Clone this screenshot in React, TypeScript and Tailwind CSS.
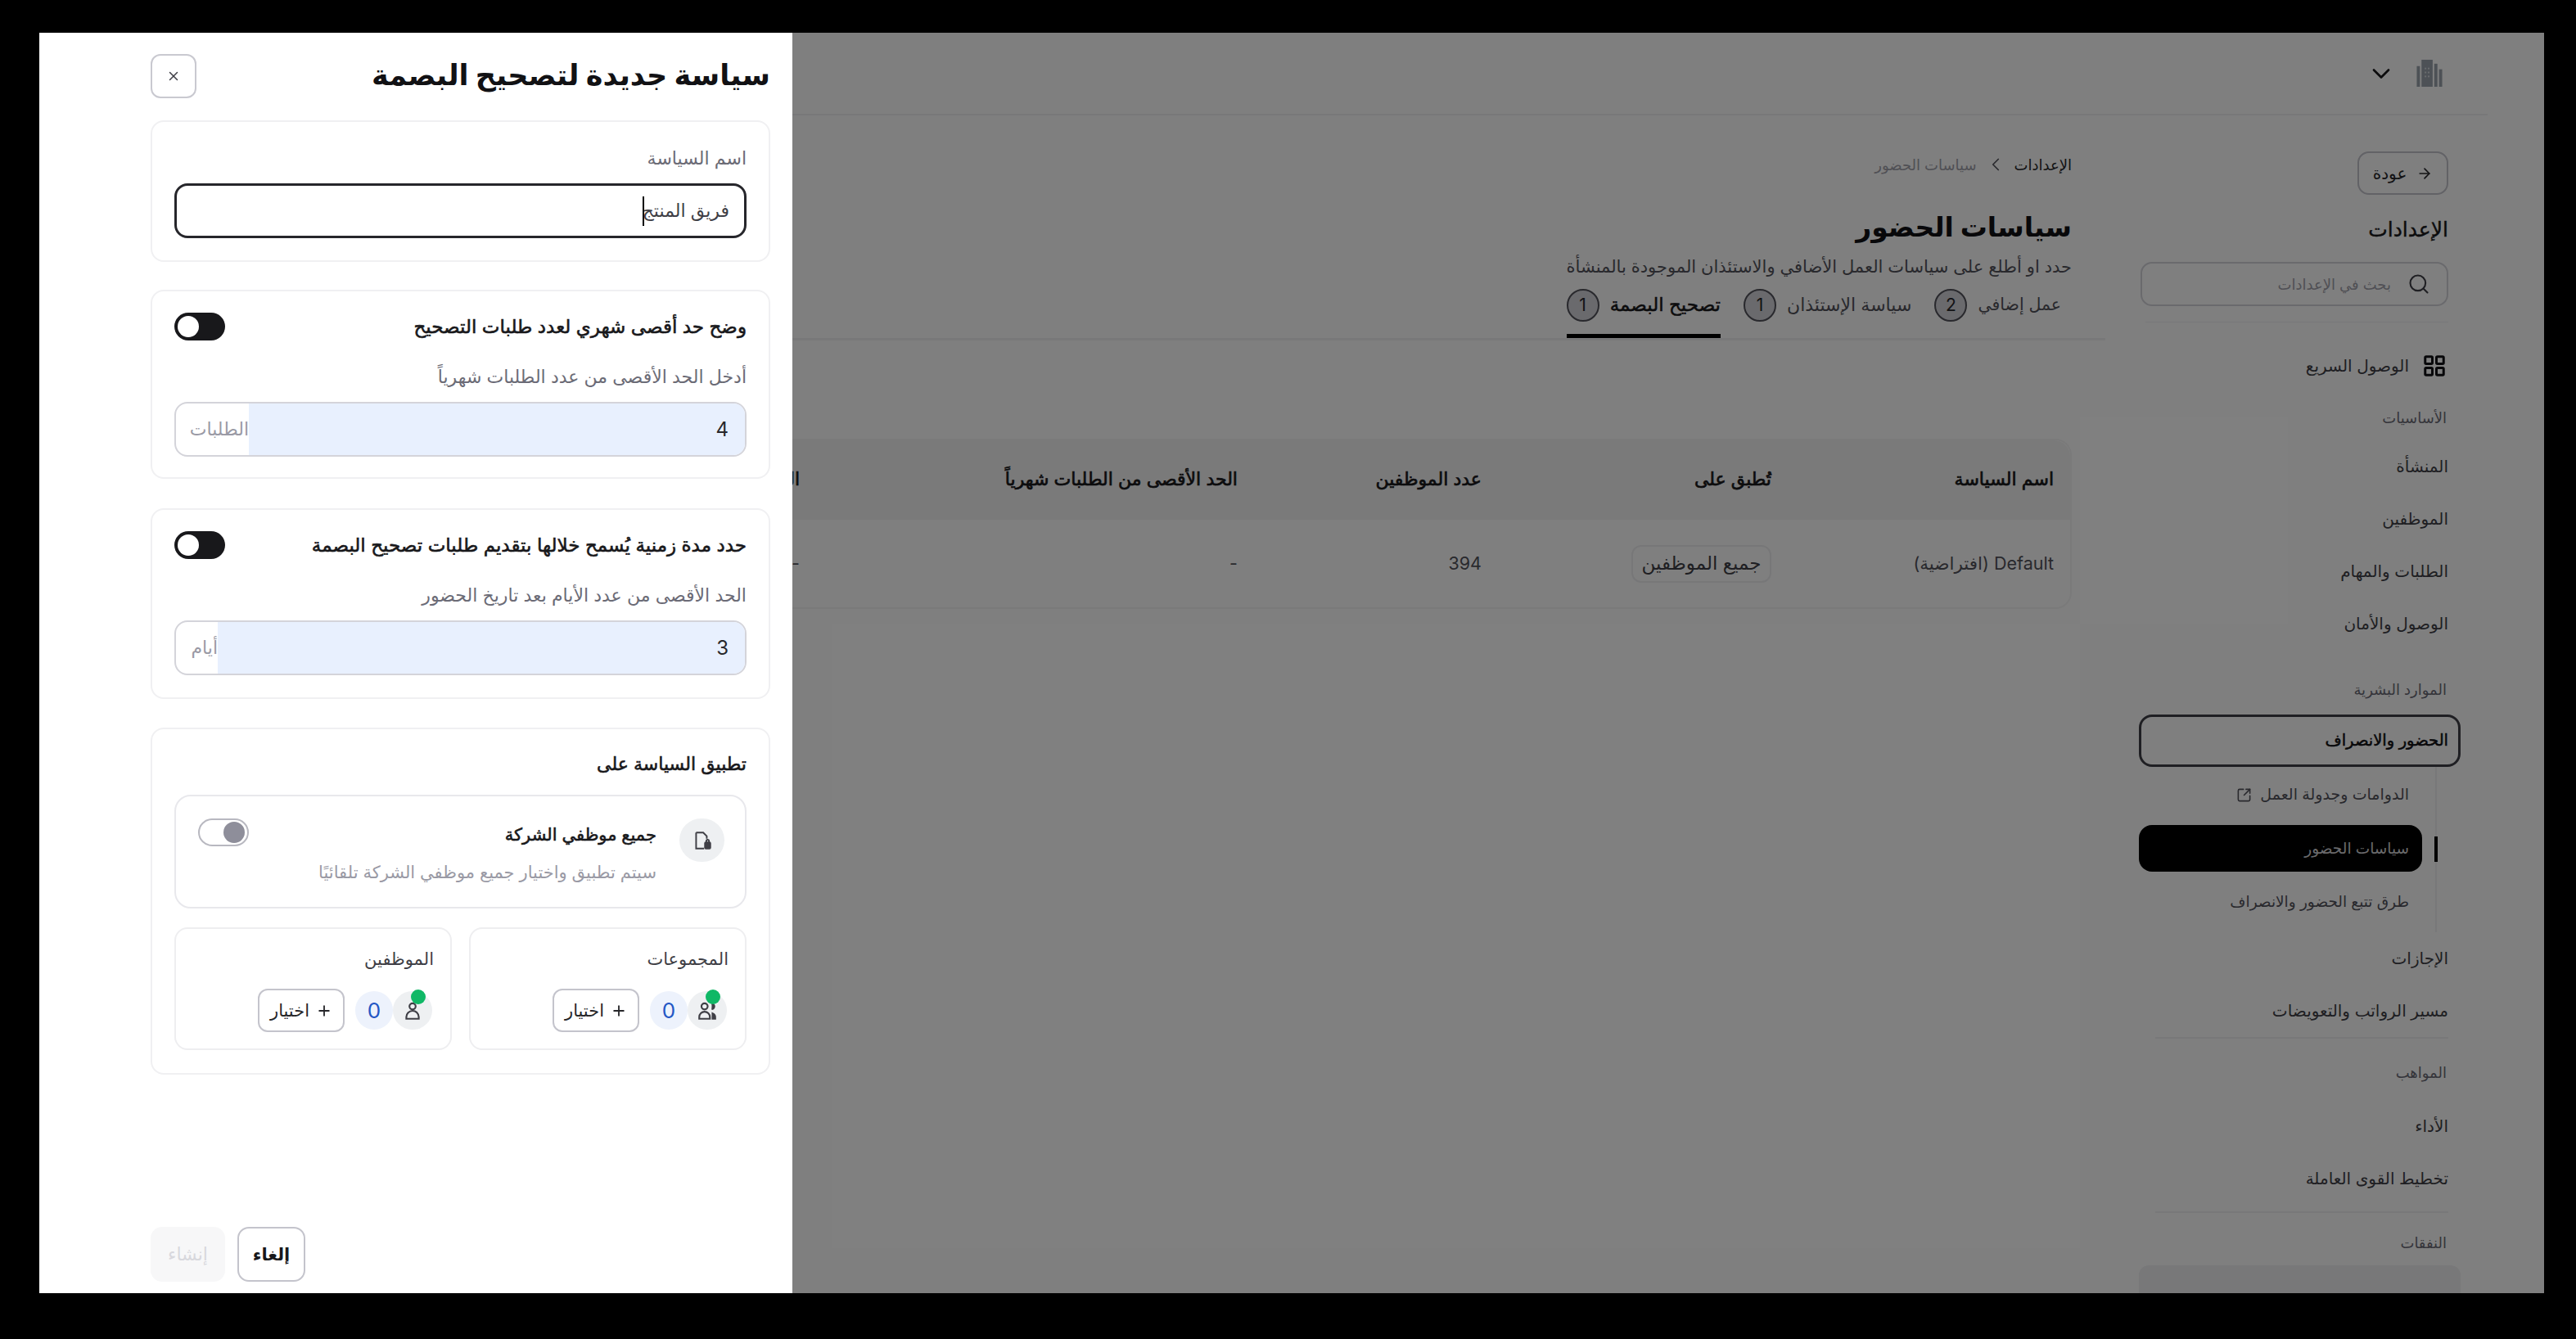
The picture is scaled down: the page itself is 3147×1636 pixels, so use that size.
import React from "react";
import { ArrowRight, ChevronDown, ChevronLeft, LayoutGrid, Plus, Search, SquareArrowOutUpRight, X } from "lucide-react";

function Toggle() {
  return (
    <div className="flex h-[34px] w-[62px] items-center justify-end rounded-full bg-[#18181b] px-[4px]" dir="rtl">
      <div className="h-[26px] w-[26px] rounded-full bg-white" />
    </div>
  );
}

function Field({ value, unit, blue }: { value: string; unit: string; blue: string }) {
  return (
    <div className="flex h-[67px] overflow-hidden rounded-[16px] border-2 border-[#d4d4da] bg-white">
      <div className="flex flex-1 items-center bg-[#e8f0fe] pr-[20px] text-[24px] text-[#27272a]">{value}</div>
      <div className={`flex items-center pl-[20px] text-[22px] text-[#9a9aa5] ${blue}`}>{unit}</div>
    </div>
  );
}

function CompanyIcon() {
  return (
    <svg viewBox="0 0 24 24" className="h-[26px] w-[26px]" fill="none" stroke="#3f3f46" strokeWidth="1.8">
      <path d="M5 3h8l4 4v3M5 3v18h9" />
      <rect x="15" y="14" width="6" height="7" rx="1" fill="#3f3f46" />
      <path d="M16.5 14v-1.5a1.5 1.5 0 0 1 3 0V14" />
    </svg>
  );
}

function PersonIcon({ group }: { group?: boolean }) {
  return (
    <svg viewBox="0 0 24 24" className="h-[26px] w-[26px]" fill="none" stroke="#3f3f46" strokeWidth="2">
      <circle cx={group ? 9 : 12} cy="7" r="3.5" />
      <path d={group ? "M3 21v-2a6 6 0 0 1 12 0v2z" : "M5 21v-2a7 7 0 0 1 14 0v2z"} />
      {group && <path d="M17 10a3 3 0 0 0 0-6M18 15a5 5 0 0 1 3 5v1h-3z" fill="#3f3f46" />}
    </svg>
  );
}

function Selector({ label, group }: { label: string; group?: boolean }) {
  return (
    <div className="flex h-[150px] flex-1 flex-col rounded-[16px] border-2 border-[#eeeef0] pr-[20px] pt-[19px]">
      <div className="h-[36px] text-[21px] leading-[36px] text-[#3f3f46]">{label}</div>
      <div className="mr-[2px] mt-[18px] flex items-center">
        <div className="relative flex h-[47px] w-[48px] items-center justify-center rounded-full bg-[#eef0f2]">
          <PersonIcon group={group} />
          <div className="absolute -top-[2px] left-[22px] h-[18px] w-[18px] rounded-full bg-[#10b866]" />
        </div>
        <div className="flex h-[47px] w-[46px] items-center justify-center rounded-full bg-[#edf2fc] text-[26px] text-[#2457c5]">0</div>
        <div className="mr-[13px] flex h-[53px] w-[106px] items-center justify-center gap-[8px] rounded-[12px] border-2 border-[#c4c4cc] bg-white text-[21px] text-[#27272a]">
          <Plus size={20} strokeWidth={2.2} />
          <span>اختيار</span>
        </div>
      </div>
    </div>
  );
}

function Panel() {
  return (
    <div dir="rtl" className="absolute inset-y-0 left-0 flex w-[920px] flex-col bg-white pl-[136px] pr-[27px] pt-[26px] pb-[14px]">
      <div className="flex h-[54px] items-center justify-between">
        <h2 className="pb-[3px] text-[35px] font-bold text-[#111114]">سياسة جديدة لتصحيح البصمة</h2>
        <div className="flex h-[54px] w-[56px] items-center justify-center rounded-[12px] border-2 border-[#c9c9d0]">
          <X size={18} strokeWidth={2} className="text-[#3f3f46]" />
        </div>
      </div>

      <section className="mt-[27px] h-[173px] rounded-[16px] border-2 border-[#f0f0f2] px-[27px] pt-[26px]">
        <div className="h-[36px] text-[22px] leading-[36px] text-[#6b6b76]">اسم السياسة</div>
        <div className="mt-[13px] flex h-[67px] items-center rounded-[16px] border-[3px] border-[#26262b] pr-[18px] text-[22px] text-[#3f3f46]">
          <span>فريق المنتج</span>
          <span className="-mr-[2px] h-[36px] w-[2px] bg-black" />
        </div>
      </section>

      <section className="mt-[34px] h-[231px] rounded-[16px] border-2 border-[#f0f0f2] px-[27px] pt-[26px]">
        <div className="flex h-[34px] items-center justify-between">
          <div className="text-[23px] text-[#18181b] [-webkit-text-stroke:0.6px_#18181b]">وضح حد أقصى شهري لعدد طلبات التصحيح</div>
          <Toggle />
        </div>
        <div className="mt-[27px] h-[34px] text-[22px] leading-[34px] text-[#6b6b76]">أدخل الحد الأقصى من عدد الطلبات شهرياً</div>
        <div className="mt-[14px]"><Field value="4" unit="الطلبات" blue="w-[89px]" /></div>
      </section>

      <section className="mt-[36px] h-[233px] rounded-[16px] border-2 border-[#f0f0f2] px-[27px] pt-[26px]">
        <div className="flex h-[34px] items-center justify-between">
          <div className="text-[23px] text-[#18181b] [-webkit-text-stroke:0.6px_#18181b]">حدد مدة زمنية يُسمح خلالها بتقديم طلبات تصحيح البصمة</div>
          <Toggle />
        </div>
        <div className="mt-[27px] h-[34px] text-[22px] leading-[34px] text-[#6b6b76]">الحد الأقصى من عدد الأيام بعد تاريخ الحضور</div>
        <div className="mt-[14px]"><Field value="3" unit="أيام" blue="w-[51px]" /></div>
      </section>

      <section className="mt-[35px] h-[424px] rounded-[16px] border-2 border-[#f0f0f2] px-[27px] pt-[26px]">
        <div className="h-[34px] text-[22px] leading-[32px] text-[#18181b] [-webkit-text-stroke:0.6px_#18181b]">تطبيق السياسة على</div>
        <div className="mt-[20px] flex h-[139px] items-start rounded-[20px] border-2 border-[#e8e8ec] pl-[27px] pr-[25px] pt-[27px]">
          <div className="flex h-[53px] w-[55px] shrink-0 items-center justify-center rounded-full bg-[#eef0f2]"><CompanyIcon /></div>
          <div className="mr-[28px] flex-1">
            <div className="text-[21px] leading-[40px] text-[#18181b] [-webkit-text-stroke:0.6px_#18181b]">جميع موظفي الشركة</div>
            <div className="mt-[4px] text-[21px] leading-[44px] text-[#9a9aa5]">سيتم تطبيق واختيار جميع موظفي الشركة تلقائيًا</div>
          </div>
          <div className="flex h-[34px] w-[62px] items-center justify-start rounded-full border-2 border-[#b8b8c0] bg-white px-[3px]">
            <div className="h-[26px] w-[26px] rounded-full bg-[#8e8e9a]" />
          </div>
        </div>
        <div className="mt-[23px] flex gap-[21px]">
          <Selector label="المجموعات" group />
          <Selector label="الموظفين" />
        </div>
      </section>

      <div className="mt-auto flex justify-end gap-[15px]">
        <div className="flex h-[67px] w-[83px] items-center justify-center rounded-[14px] border-2 border-[#c4c4cc] text-[21px] font-bold text-[#18181b]">إلغاء</div>
        <div className="flex h-[67px] w-[91px] items-center justify-center rounded-[14px] bg-[#f7f7f8] text-[22px] text-[#d8d8dd]">إنشاء</div>
      </div>
    </div>
  );
}

function Row({ children }: { children: React.ReactNode }) {
  return <div className="flex h-[64px] items-center pr-[15px] text-[20px] text-[#3f3f46]">{children}</div>;
}

function Group({ children }: { children: React.ReactNode }) {
  return <div className="flex h-[56px] items-center pr-[17px] text-[18px] text-[#6b6b76]">{children}</div>;
}

function Divider({ className }: { className: string }) {
  return <div className={`mr-[15px] w-[358px] border-b-2 border-[#f0f0f2] ${className}`} />;
}

function Sidebar() {
  return (
    <aside className="mr-[102px] w-[434px] shrink-0 pl-[41px]">
      <div className="pt-[44px]">
        <div className="mr-[15px] flex h-[53px] w-[111px] items-center justify-center gap-[12px] rounded-[14px] border-2 border-[#c4c4cc] text-[20px] text-[#27272a]">
          <ArrowRight size={20} /> <span>عودة</span>
        </div>
        <div className="mt-[20px] pr-[15px] text-[25px] leading-[44px] text-[#18181b] [-webkit-text-stroke:0.4px_#18181b]">الإعدادات</div>
        <div className="mr-[15px] mt-[18px] flex h-[54px] w-[376px] items-center rounded-[14px] border-2 border-[#d4d4da] pr-[20px] text-[18px] text-[#a0a0aa]">
          <Search size={28} strokeWidth={1.8} className="text-[#3f3f46]" />
          <span className="mr-[20px]">بحث في الإعدادات</span>
        </div>
        <div className="mr-[15px] mt-[19px] w-[370px] border-b border-[#f0f0f2]" />
      </div>
      <div className="flex h-[88px] flex-col">
        <div className="mt-[33px] flex h-[40px] items-center pr-[17px] text-[20px] text-[#3f3f46]">
          <LayoutGrid size={30} strokeWidth={2.4} className="text-[#111114]" />
          <span className="mr-[16px]">الوصول السريع</span>
        </div>
      </div>
      <Group>الأساسيات</Group>
      <Row>المنشأة</Row>
      <Row>الموظفين</Row>
      <Row>الطلبات والمهام</Row>
      <Row>الوصول والأمان</Row>
      <div className="mt-[20px]"><Group>الموارد البشرية</Group></div>
      <div className="mt-[3px] flex h-[64px] items-center rounded-[16px] border-[3px] border-[#3f3f46] pr-[12px] text-[19.5px] text-[#111114] [-webkit-text-stroke:0.5px_#111114]">الحضور والانصراف</div>
      <div className="relative mr-[29px] border-r-2 border-[#f0f0f2]">
        <div className="flex h-[68px] items-center pr-[32px] text-[19px] text-[#52525b]">
          الدوامات وجدولة العمل
          <SquareArrowOutUpRight size={19} className="mr-[10px]" />
        </div>
        <div className="mr-[16px] mt-[3px] flex h-[57px] w-[346px] items-center rounded-[16px] bg-black pr-[16px] text-[18.5px] text-[#d4d4d8]">سياسات الحضور</div>
        <div className="flex h-[74px] items-center pr-[32px] text-[18.5px] text-[#52525b]">طرق تتبع الحضور والانصراف</div>
        <div className="absolute -right-[3px] top-[85px] h-[31px] w-[4px] bg-black" />
      </div>
      <Row>الإجازات</Row>
      <Row>مسير الرواتب والتعويضات</Row>
      <Divider className="" />
      <div className="mt-[13px]"><Group>المواهب</Group></div>
      <div className="mt-[6px]"><Row>الأداء</Row></div>
      <Row>تخطيط القوى العاملة</Row>
      <Divider className="mt-[8px]" />
      <div className="mt-[8px]"><Group>النفقات</Group></div>
      <div className="h-[40px] rounded-t-[12px] bg-[#f0f0f2]" />
    </aside>
  );
}

function Tab({ label, n, active, size }: { label: string; n: string; active?: boolean; size: string }) {
  return (
    <div className={`flex h-[66px] items-center gap-[13px] border-b-[5px] pb-[10px] ${active ? "border-black text-[#18181b] [-webkit-text-stroke:0.5px_#18181b]" : "border-transparent text-[#52525b]"}`}>
      <span className={size}>{label}</span>
      <span className="flex h-[40px] w-[40px] items-center justify-center rounded-full border-2 border-[#52525b] bg-[#d4d4da] text-[21px] text-[#27272a] [-webkit-text-stroke:0px]">{n}</span>
    </div>
  );
}

function Main() {
  const cols = "grid grid-cols-[345px_354px_298px_535px_1fr]";
  return (
    <main className="min-w-0 flex-1">
      <div className="pr-[41px] pt-[44px]">
        <div className="flex h-[32px] items-center gap-[10px] text-[18px] text-[#a0a0aa]">
          <span className="text-[#27272a]">الإعدادات</span>
          <ChevronLeft size={26} strokeWidth={1.6} className="text-[#52525b]" />
          <span>سياسات الحضور</span>
        </div>
        <h1 className="mt-[35px] text-[33px] font-bold leading-[50px] text-[#111114]">سياسات الحضور</h1>
        <p className="mt-[6px] text-[21px] leading-[36px] text-[#52525b]">حدد او أطلع على سياسات العمل الأضافي والاستئذان الموجودة بالمنشأة</p>
      </div>
      <div className="mt-[3px] flex gap-[28px] border-b-[3px] border-[#f0f0f2] pr-[54px]">
        <Tab label="عمل إضافي" n="2" size="text-[20.5px]" />
        <Tab label="سياسة الإستئذان" n="1" size="text-[22px]" />
        <Tab label="تصحيح البصمة" n="1" active size="text-[23px]" />
      </div>
      <div className="mr-[41px] mt-[120px] rounded-[20px] border-2 border-[#f4f4f5]">
        <div className={`${cols} h-[97px] items-center rounded-t-[20px] bg-[#f4f4f5] pb-[3px] pr-[20px] text-[22px] text-[#18181b] [-webkit-text-stroke:0.7px_#18181b]`}>
          <div>اسم السياسة</div>
          <div>تُطبق على</div>
          <div>عدد الموظفين</div>
          <div>الحد الأقصى من الطلبات شهرياً</div>
          <div>الحد الأقصى</div>
        </div>
        <div className={`${cols} h-[107px] items-center pr-[20px] text-[21.5px] text-[#52525b]`}>
          <div>Default (افتراضية)</div>
          <div><span className="inline-flex h-[46px] w-[171px] items-center justify-center rounded-[12px] border-2 border-[#eeeef0] text-[23px] text-[#3f3f46]">جميع الموظفين</span></div>
          <div>394</div>
          <div>-</div>
          <div>-</div>
        </div>
      </div>
    </main>
  );
}

function Building() {
  return (
    <svg viewBox="0 0 32 34" className="h-[33px] w-[32px]" fill="#9aa3ad">
      <rect x="0" y="8" width="4" height="26" />
      <rect x="6" y="0" width="14" height="34" />
      <rect x="22" y="5" width="4" height="29" />
      <rect x="28" y="12" width="4" height="22" />
      <g fill="#d4d8dd">
        <rect x="10" y="10" width="2" height="2" /><rect x="14" y="10" width="2" height="2" />
        <rect x="10" y="15" width="2" height="2" /><rect x="14" y="15" width="2" height="2" />
        <rect x="10" y="20" width="2" height="2" /><rect x="14" y="20" width="2" height="2" />
      </g>
    </svg>
  );
}

export default function App() {
  return (
    <div className="h-[1636px] w-[3147px] overflow-hidden bg-black pb-[56px] pl-[48px] pr-[39px] pt-[40px] font-['Inter','DejaVu_Sans',sans-serif]">
      <div className="relative h-full w-full overflow-hidden bg-white">
        <div dir="rtl" className="h-full">
          <header className="mr-[69px] flex h-[101px] items-center gap-[25px] border-b-2 border-[#f0f0f2] pr-[55px]">
            <Building />
            <ChevronDown size={36} strokeWidth={1.8} className="text-[#18181b]" />
          </header>
          <div className="flex">
            <Sidebar />
            <Main />
          </div>
        </div>
        <div className="absolute inset-0 bg-black/50" />
        <Panel />
      </div>
    </div>
  );
}
